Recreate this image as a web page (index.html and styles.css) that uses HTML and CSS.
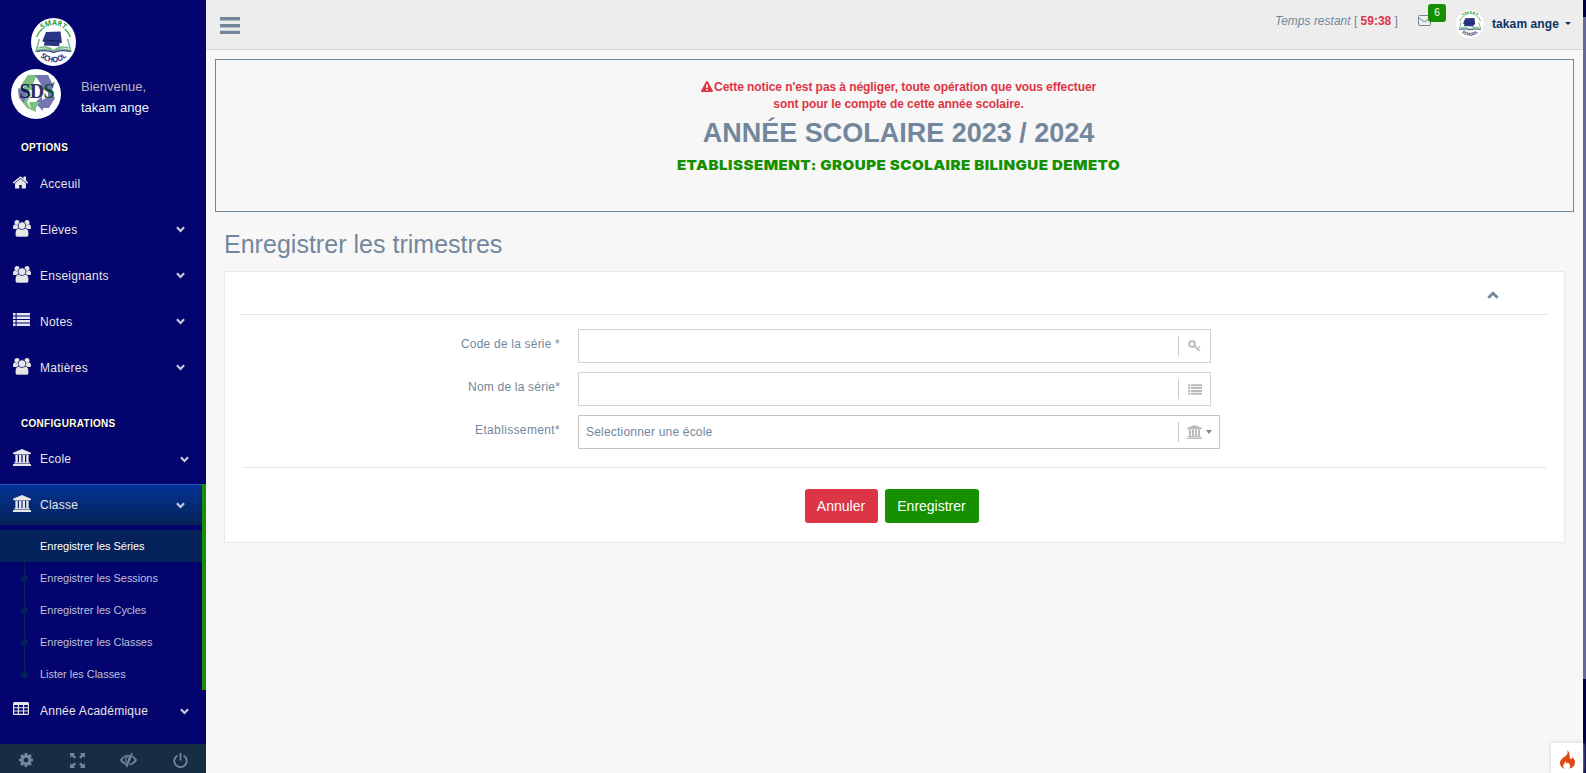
FILE: index.html
```html
<!DOCTYPE html>
<html lang="fr">
<head>
<meta charset="utf-8">
<title>Smart School</title>
<link rel="stylesheet" href="styles.css">
</head>
<body>
<svg class="defs" width="0" height="0">
  <defs>
    <symbol id="home" viewBox="0 0 1792 1792"><path d="M1472 992v480q0 26-19 45t-45 19h-384v-384h-256v384h-384q-26 0-45-19t-19-45v-480q0-1 .5-3t.5-3l575-474 575 474q1 2 1 6zm223-69l-62 74q-8 9-21 11h-3q-13 0-21-7l-692-577-692 577q-12 8-24 7-13-2-21-11l-62-74q-8-10-7-23.5t11-21.5l719-599q32-26 76-26t76 26l244 204v-195q0-14 9-23t23-9h192q14 0 23 9t9 23v408l219 182q10 8 11 21.500t-7 23.500z"/></symbol>
    <symbol id="users" viewBox="0 0 18 17"><circle cx="4" cy="2.500" r="2.500"/><circle cx="14" cy="2.500" r="2.500"/><path d="M0 8c0-2 .6-3.400 1.800-3.400 1.500 1 3 1 4.500 0V9H1.500C.6 9 0 8.800 0 8zM18 8c0-2-.6-3.400-1.800-3.400-1.500 1-3 1-4.500 0V9h4.800C17.400 9 18 8.800 18 8z"/><g stroke="#03046d" stroke-width=".7"><path d="M5.300 8.200h7.400c2.500.4 3.100 3.300 3.100 6 0 1.900-1 2.900-2.400 2.900H4.600c-1.400 0-2.400-1-2.400-2.900 0-2.700.6-5.600 3.100-6z"/><circle cx="9" cy="5.700" r="3.900"/></g></symbol>
    <symbol id="list" viewBox="0 0 17 13"><path d="M0 0h2.600v2.500H0zM3.600 0H17v2.500H3.600zM0 3.500h2.600V6H0zM3.600 3.500H17V6H3.600zM0 7h2.600v2.500H0zM3.600 7H17v2.500H3.600zM0 10.500h2.600V13H0zM3.600 10.500H17V13H3.600z"/></symbol>
    <symbol id="bank" viewBox="64 128 1920 1792"><path d="M1024 128l960 384v128h-128q0 26-20.500 45t-48.500 19h-1526q-28 0-48.500-19t-20.500-45h-128v-128zm-704 640h256v768h128v-768h256v768h128v-768h256v768h128v-768h256v768h59q28 0 48.500 19t20.500 45v64h-1664v-64q0-26 20.500-45t48.500-19h59zm1595 960q28 0 48.500 19t20.500 45v128h-1920v-128q0-26 20.500-45t48.500-19z"/></symbol>
    <symbol id="table" viewBox="0 0 16 13"><path fill-rule="evenodd" d="M1.500 0h13Q16 0 16 1.500v10q0 1.500-1.500 1.500h-13Q0 13 0 11.500v-10Q0 0 1.500 0zM1.200 3v2.200h3.600V3zM6 3v2.200h4V3zm5.200 0v2.200h3.600V3zM1.200 6.300v2.200h3.600V6.300zm4.800 0v2.200h4V6.300zm5.200 0v2.200h3.600V6.300zM1.200 9.600v2.200h3.600V9.600zm4.800 0v2.200h4V9.600zm5.200 0v2.200h3.600V9.600z"/></symbol>
    <symbol id="chev" viewBox="0.600 0.400 10.800 7.400"><path d="M1.700 1.500L6 5.800l4.300-4.300" fill="none" stroke="currentColor" stroke-width="2.600"/></symbol>
    <symbol id="cog" viewBox="128 128 1536 1536"><path d="M1152 896q0-106-75-181t-181-75-181 75-75 181 75 181 181 75 181-75 75-181zm512-109v222q0 12-8 23t-20 13l-185 28q-19 54-39 91 35 50 107 138 10 12 10 25t-9 23q-27 37-99 108t-94 71q-12 0-26-9l-138-108q-44 23-91 38-16 136-29 186-7 28-36 28h-222q-14 0-24.500-8.500t-11.500-21.500l-28-184q-49-16-90-37l-141 107q-10 9-25 9-14 0-25-11-126-114-165-168-7-10-7-23 0-12 8-23 15-21 51-66.500t54-70.500q-27-50-41-99l-183-27q-13-2-21-12.500t-8-23.500v-222q0-12 8-23t19-13l186-28q14-46 39-92-40-57-107-138-10-12-10-24 0-10 9-23 26-36 98.500-107.500t94.500-71.500q13 0 26 10l138 107q44-23 91-38 16-136 29-186 7-28 36-28h222q14 0 24.500 8.500t11.500 21.500l28 184q49 16 90 37l142-107q9-9 24-9 13 0 25 10 129 119 165 170 7 8 7 22 0 12-8 23-15 21-51 66.500t-54 70.500q26 50 41 98l183 28q13 2 21 12.500t8 23.500z"/></symbol>
    <symbol id="school" viewBox="0 0 48 48" preserveAspectRatio="none">
      <circle cx="24" cy="24" r="24" fill="#fff"/>
      <path id="arc-top" d="M8.500 16A18 18 0 0 1 39.500 16" fill="none"/>
      <path id="arc-bottom" d="M6 33.500A20.500 20.500 0 0 0 42 33.500" fill="none"/>
      <path d="M6 19q2-5 6-8M42 19q-2-5-6-8" fill="none" stroke="#35a045" stroke-width="1.400"/>
      <text class="logo-top"><textPath href="#arc-top" startOffset="50%" text-anchor="middle">SMART</textPath></text>
      <text class="logo-bottom"><textPath href="#arc-bottom" startOffset="50%" text-anchor="middle">SCHOOL</textPath></text>
      <path d="M16 14l15.500-.5 1.500 11-3 1.200.5 2.500-17-.7 1-3.300-2.500-1z" fill="#2b3585"/>
      <path d="M15 22l15 1" stroke="#151d58" stroke-width="1"/>
      <path d="M9 21L5.500 33Q16 29 24 33.500 32 29 42.500 33L39 21M8 30q9-3 16 3 7-6 16-3" fill="none" stroke="#77b88b" stroke-width="1.600"/>
      <path d="M6 33.500q10-2 18 .8 8-2.800 18-.8" fill="none" stroke="#394887" stroke-width="1.300"/>
    </symbol>
  </defs>
</svg>

<div class="page">
  <aside class="sidebar">
    <div class="brand"><svg class="brand-logo"><use href="#school"/></svg></div>
    <div class="profile">
      <svg class="avatar" viewBox="0 0 50 50">
        <circle cx="25" cy="25" r="25" fill="#fff"/>
        <path d="M17 6h9l-5 11 3 3-13 3 2-5-3-2zM7 19l10 1 3 6-4 7 3 6h6v4l-9-4-8-10z" fill="#7cc081"/>
        <path d="M24 6h13l4 8 3-1-4 10-13-4 4-2zM37 20l7 9-6 10h-6v3l-8-8 7-7v4l6-3zM7 20l9 2-3 12-5-6z" fill="#7475b5"/>
        <path d="M18 33h11l-5 7h-4z" fill="#7cc081"/>
        <text x="8.500" y="28.500" class="sds" textLength="35"><tspan fill="#17195c">S</tspan><tspan fill="#30315e">D</tspan><tspan fill="#12502c">S</tspan></text>
      </svg>
      <div class="welcome"><span>Bienvenue,</span><strong>takam ange</strong></div>
    </div>
    <h3 class="section">OPTIONS</h3>
    <ul class="menu">
      <li><a><svg class="ico home"><use href="#home"/></svg><span>Acceuil</span></a></li>
      <li><a><svg class="ico users"><use href="#users"/></svg><span>Elèves</span><svg class="chev"><use href="#chev"/></svg></a></li>
      <li><a><svg class="ico users"><use href="#users"/></svg><span>Enseignants</span><svg class="chev"><use href="#chev"/></svg></a></li>
      <li><a><svg class="ico list"><use href="#list"/></svg><span>Notes</span><svg class="chev"><use href="#chev"/></svg></a></li>
      <li><a><svg class="ico users"><use href="#users"/></svg><span>Matières</span><svg class="chev"><use href="#chev"/></svg></a></li>
    </ul>
    <h3 class="section config">CONFIGURATIONS</h3>
    <ul class="menu wide">
      <li><a><svg class="ico bank"><use href="#bank"/></svg><span>Ecole</span><svg class="chev"><use href="#chev"/></svg></a></li>
      <li class="active">
        <a><svg class="ico bank"><use href="#bank"/></svg><span>Classe</span><svg class="chev"><use href="#chev"/></svg></a>
        <ul class="sub">
          <li class="current">Enregistrer les Séries</li>
          <li>Enregistrer les Sessions</li>
          <li>Enregistrer les Cycles</li>
          <li>Enregistrer les Classes</li>
          <li>Lister les Classes</li>
        </ul>
      </li>
      <li><a><svg class="ico table"><use href="#table"/></svg><span>Année Académique</span><svg class="chev"><use href="#chev"/></svg></a></li>
    </ul>
    <div class="side-footer">
      <div><svg width="14" height="14"><use href="#cog"/></svg></div>
      <div><svg width="15" height="15" viewBox="0 0 16 16"><path d="M0 0h5.500L3.900 1.600 6.500 4.200 4.700 6 2 3.400.4 5zM16 0v5L14.400 3.400 11.300 6 9.700 4.200l2.500-2.600L10.500 0zM0 16v-5l1.600 1.600L4.700 10l1.800 1.800-2.600 2.600L5.500 16zM16 16h-5.500l1.600-1.600-2.400-2.600L11.300 10l3.100 2.600L16 11z"/></svg></div>
      <div><svg width="17" height="16" viewBox="0 0 17 16"><g fill="none" stroke="currentColor" stroke-width="1.700"><path d="M9.500 3.500Q4 3.500 1 8q2.500 4 6 4.700"/><path d="M12 1L6.500 15M12.500 4.200L16 8q-2.500 4-6.500 4.800"/><path d="M7.500 5Q5 6 5.500 8.500q.5 1.500 2 2" stroke-width="1.200"/></g><path d="M9 4l3-1-3.500 9L7 11z"/></svg></div>
      <div><svg width="15" height="15" viewBox="0 0 15 15"><path d="M4.500 2.500a6.200 6.200 0 1 0 6 0M7.500 0v7.500" fill="none" stroke="currentColor" stroke-width="1.800"/></svg></div>
    </div>
  </aside>

  <div class="content">
    <header class="topbar">
      <svg class="burger" width="20" height="17" viewBox="0 0 20 17"><path d="M0 0h20v3.500H0zM0 7h20v3.500H0zM0 13.700h20V17H0z"/></svg>
      <div class="top-right">
        <div class="timer"><i>Temps restant</i> [ <b>59:38</b> ]</div>
        <div class="mail">
          <svg width="13" height="11" viewBox="0 0 13 11"><path d="M.5 1.500q0-1 1-1h10q1 0 1 1v8q0 1-1 1h-10q-1 0-1-1zM.5 2.500q2.500 1.800 4.500 3.500 1.500 1 3 0 2-1.700 4.500-3.500" fill="none" stroke="currentColor"/></svg>
          <span class="badge">6</span>
        </div>
        <svg class="user-logo"><use href="#school"/></svg>
        <div class="user">takam ange</div>
        <span class="caret"></span>
      </div>
    </header>
    <main>
      <section class="notice">
        <p><svg width="12" height="11" viewBox="0 0 12 11"><path fill-rule="evenodd" d="M6 0q.6 0 .9.600l5 9.200q.3 1.200-.8 1.200H.9Q-.2 11 .1 9.800l5-9.200Q5.400 0 6 0zM5 3.500l.3 3.500h1.400L7 3.500zM5.100 8v1.600h1.800V8z"/></svg> Cette notice n'est pas à négliger, toute opération que vous effectuer<br>sont pour le compte de cette année scolaire.</p>
        <h1>ANNÉE SCOLAIRE 2023 / 2024</h1>
        <h2>ETABLISSEMENT: GROUPE SCOLAIRE BILINGUE DEMETO</h2>
      </section>
      <h3 class="title">Enregistrer les trimestres</h3>
      <section class="panel">
        <div class="panel-head"><svg class="up"><use href="#chev"/></svg></div>
        <form>
          <div class="row"><label>Code de la série *</label><div class="field"><span class="addon"><svg width="13" height="12" viewBox="0 0 13 12"><g fill="none" stroke="currentColor"><circle cx="4" cy="4" r="3" stroke-width="1.900"/><path d="M6.300 5.800l5.200 5M8.700 9.600L10.300 8M10.700 6.500l1.500 1.200" stroke-width="1.600"/></g></svg></span></div></div>
          <div class="row"><label>Nom de la série*</label><div class="field"><span class="addon"><svg width="14" height="11"><use href="#list"/></svg></span></div></div>
          <div class="row"><label class="spaced">Etablissement*</label><div class="field select"><span class="value">Selectionner une école</span><span class="addon bank-addon"><svg width="15" height="14"><use href="#bank"/></svg><span class="arrow"></span></span></div></div>
        </form>
        <div class="actions"><button class="red">Annuler</button><button class="green">Enregistrer</button></div>
      </section>
    </main>
  </div>
  <div class="scroll"><div class="thumb"></div></div>
  <div class="debug"><svg width="15" height="19" viewBox="0 0 15 19"><path d="M7.300 0c.7 3 .2 4-1.800 6C3 8 0 9.500 0 13c0 2.700 1.800 4.800 4.500 6C3 17 2.700 15.500 4 14c.7-.8 1.200-1.500 1-2.800 1.200.8 1.500 1.600 1.300 2.800 1-.3 1.200-1 1.100-1.800 2.400 1.400 3.800 4.100 1.900 6.600C13 17.500 15 15.500 15 12.300c0-2.600-1.400-4-3-5.300.2 1.500-.5 2.200-1.300 2.100C8.800 8.800 11 4 7.300 0z"/></svg></div>
</div>
</body>
</html>
```
FILE: styles.css
```css
* { box-sizing: border-box; }
body {
  margin: 0;
  font: 13px/1.471 "Liberation Sans", Arial, sans-serif;
  color: #73879c;
  background: #f7f7f7;
}
.defs { position: absolute; }
ul { list-style: none; margin: 0; padding: 0; }
h1, h2, h3, p { margin: 0; }
svg { fill: currentColor; display: block; flex: none; }
.page { display: flex; width: 1586px; height: 773px; overflow: hidden; position: relative; }

.sidebar { width: 206px; background: #03046d; color: #e7e7e7; display: flex; flex-direction: column; flex: none; }
.brand { height: 69px; padding: 18px 0 0 31px; }
.brand-logo { width: 45px; height: 48px; }
.logo-top { font: bold 7.500px "Open Sans", sans-serif; fill: #2a9a3c; }
.logo-bottom { font: bold 7.500px "Open Sans", sans-serif; fill: #26306f; }
.profile { display: flex; height: 66px; padding-left: 11px; }
.avatar { width: 50px; height: 50px; }
.sds { font: bold 20px "Liberation Serif", serif; }
.welcome { display: flex; flex-direction: column; padding: 8px 0 0 20px; line-height: 20px; }
.welcome span { color: #bab8b8; line-height: 20px; }
.welcome strong { font-weight: normal; color: #ecf0f1; margin-top: 1px; }
.section {
  height: 28px; padding: 5px 0 0 21px;
  font-size: 10px; line-height: 15px; letter-spacing: .3px;
  color: #fff; text-shadow: 1px 1px #000;
}
.config { height: 27px; padding-top: 5px; margin-top: 18px; }
.menu > li { margin-bottom: 5px; }
.menu a { display: flex; align-items: center; height: 41px; padding: 0 21px 0 13px; font-size: 12px; letter-spacing: .25px; }
.menu.wide a { padding: 1px 17px 0 13px; }
.menu.wide .active > a { padding-right: 17px; }
.menu a span { flex: 1; padding-top: 2px; }
.ico { margin: -3px 9px 0 0; width: 18px; height: 17px; }
.ico.home { width: 17px; height: 17px; margin: -2px 11px 0 -1px; }
.ico.list { width: 17px; height: 13px; margin: -4px 10px 0 0; }
.ico.bank { height: 17px; margin-top: -3px; }
.ico.table { width: 16px; height: 13px; margin: -5px 11px 0 0; }
.chev { width: 9px; height: 7px; color: #c4cfda; }
.menu > li.active { margin-bottom: 0; border-right: 4px solid #169000; }
.active > a { background: linear-gradient(#033297, #062357); box-shadow: inset 0 1px #2852ac; margin-bottom: 5px; }
.sub li { position: relative; height: 32px; padding-left: 40px; font-size: 11px; line-height: 32px; letter-spacing: -.03px; color: #bfc0da; }
.sub li::before { content: ""; position: absolute; left: 24px; top: 0; bottom: 0; width: 1px; background: #05215a; }
.sub li::after { content: ""; position: absolute; left: 21px; top: 13px; width: 7px; height: 7px; border-radius: 50%; background: #05215a; }
.sub li:last-child::before { bottom: 16px; }
.sub .current { background: #05235a; color: #fff; }
.sub .current::before, .sub .current::after { display: none; }
.side-footer { margin-top: auto; height: 29px; background: #172d44; color: #74879b; display: flex; flex: none; }
.side-footer div { flex: 1; display: flex; justify-content: center; align-items: center; padding-top: 3px; }

.content { flex: none; width: 1377px; }
.topbar { height: 50px; background: #ededed; border-bottom: 1px solid #d9d9d9; display: flex; padding-left: 14px; }
.burger { margin-top: 17px; }
.top-right { margin-left: auto; display: flex; padding-right: 12px; }
.timer { font-size: 12px; line-height: 18px; margin: 12px 0 0 -1px; width: 144px; white-space: pre; }
.timer b { color: #dc3545; }
.mail { position: relative; width: 38px; padding-top: 15px; margin-left: -1px; }
.badge { position: absolute; left: 10px; top: 4px; width: 18px; height: 18px; border-radius: 3px; background: #169000; color: #fff; font-size: 10px; line-height: 18px; text-align: center; }
.user-logo { width: 28px; height: 28px; margin-top: 10px; }
.user { margin: 15px 6px 0 8px; font-size: 12px; line-height: 19px; letter-spacing: .1px; font-weight: bold; color: #0a3263; }
.caret { width: 6px; height: 3px; margin-top: 22px; background: #0a3263; clip-path: polygon(0 0, 100% 0, 50% 100%); }

main { padding: 9px 9px 0 9px; }
.notice { height: 153px; border: 1px solid #73879c; text-align: center; padding: 19px 0 0 8px; }
.notice p { color: #dc3545; font-weight: bold; font-size: 12px; line-height: 17px; letter-spacing: -.07px; }
.notice p svg { display: inline-block; vertical-align: -1px; margin-right: -2px; }
.notice h1 { font-size: 27px; line-height: 34px; margin-top: 3px; }
.notice h2 { font: 900 13.500px/20px Inter, sans-serif; letter-spacing: .4px; color: #169000; margin-top: 5px; transform: scaleX(1.120); }
.title { font-size: 25px; font-weight: normal; line-height: 30px; margin: 17px 0 12px 9px; letter-spacing: .02px; }
.panel { margin: 0 9px; height: 272px; background: #fff; border: 1px solid #e6e9ed; padding: 0 15px; }
.panel-head { height: 43px; border-bottom: 1px solid #e6e9ed; display: flex; justify-content: flex-end; padding: 19px 50px 0 0; }
.up { width: 12px; height: 8px; transform: rotate(180deg); }
form { padding-top: 14px; margin: 0 3px; height: 153px; border-bottom: 1px solid #e5e5e5; }
.row { display: flex; height: 43px; }
.row label { width: 317px; text-align: right; margin-right: 18px; padding-top: 7px; font-size: 12px; letter-spacing: .2px; }
.row .spaced { letter-spacing: .35px; }
.field { width: 633px; height: 34px; border: 1px solid #ced4da; display: flex; align-items: center; }
.select { width: 642px; border-color: #c4c4c4; }
.value { padding: 2px 0 0 7px; font-size: 12px; letter-spacing: .2px; }
.addon { margin-left: auto; height: 20px; width: 32px; border-left: 1px solid #ccc; display: flex; align-items: center; padding-left: 9px; color: #bbb; }
.bank-addon { width: 41px; padding-left: 8px; }
.arrow { width: 6px; height: 4px; margin-left: 4px; background: #888; clip-path: polygon(0 0, 100% 0, 50% 100%); }
.actions { display: flex; gap: 7px; padding: 21px 0 0 565px; }
button { border: 0; height: 34px; border-radius: 3px; color: #fff; font: 14px "Liberation Sans", Arial, sans-serif; padding: 0 1px 0 0; }
.red { width: 73px; background: #dc3545; }
.green { width: 94px; background: #169000; }

.scroll { width: 3px; flex: none; background: #000045; padding-top: 17px; }
.thumb { height: 662px; background: #67679b; }
.debug { position: absolute; right: 3px; bottom: 0; width: 32px; height: 30px; background: #fff; box-shadow: 0 0 4px #ccc; color: #dd4814; padding: 7px 0 0 9px; }
```
